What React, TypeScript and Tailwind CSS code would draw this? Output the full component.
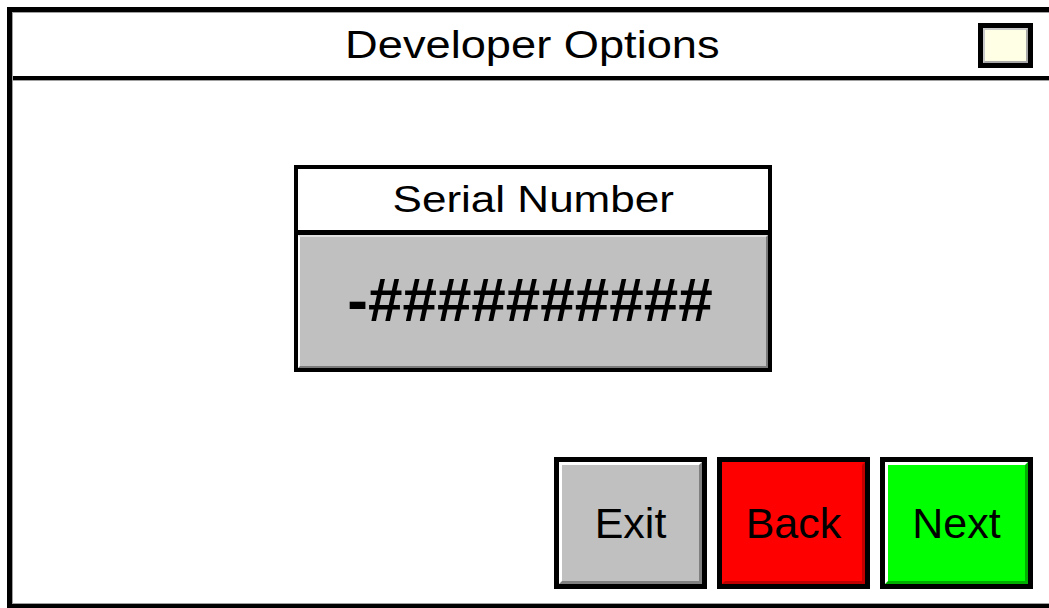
import React from "react";

const font = { fontFamily: '"Liberation Sans", Arial, sans-serif' };

function Btn({ label, bg, light, dark }: { label: string; bg: string; light: string; dark: string }) {
  return (
    <div className="w-[153px] h-[132px] border-[5px] border-black flex">
      <div
        className={`flex-1 flex items-center justify-center border-t-[3px] border-l-[3px] border-r-[3px] border-b-[3px] ${bg} ${light} ${dark}`}
      >
        <span className="text-[43px] leading-none text-black">{label}</span>
      </div>
    </div>
  );
}

export default function App() {
  return (
    <div className="w-[1049px] h-[608px] bg-white overflow-hidden pl-[7px] pt-[7px]" style={font}>
      <div className="w-[1050px] h-[602px] border-[5px] border-black flex">
        <div className="flex-1 flex flex-col border border-[#a0a0a0]">
          {/* header */}
          <div className="h-[63px] grid grid-cols-[1fr_auto_1fr] items-center">
            <div />
            <span className="inline-block text-[38px] leading-none text-black scale-x-[1.19]">
              Developer Options
            </span>
            <div className="flex justify-end pr-[18px] pt-[2px]">
              <div className="w-[55px] h-[45px] border-[5px] border-black flex">
                <div className="flex-1 bg-[#ffffe6] border-t-2 border-l-2 border-t-[#c8c8c8] border-l-[#c8c8c8] border-r-2 border-b-2 border-r-[#a8a8a8] border-b-[#a8a8a8]" />
              </div>
            </div>
          </div>
          <div className="h-[4px] bg-black" />
          <div className="h-px bg-[#a0a0a0]" />
          {/* body */}
          <div className="flex-1 flex flex-col pl-[281px] pt-[84px]">
            <div className="w-[478px] h-[207px] border-4 border-black flex flex-col">
              <div className="h-[61px] bg-white flex items-center justify-center">
                <span className="inline-block text-[37px] leading-none text-black scale-x-[1.19]">Serial Number</span>
              </div>
              <div className="h-[5px] bg-black" />
              <div className="flex-1 bg-[#c0c0c0] border-t-2 border-l-2 border-t-[#e0e0e0] border-l-[#ffffff] border-r-2 border-b-2 border-r-[#7a7a7a] border-b-[#7a7a7a] flex items-center justify-center">
                <span className="text-[62px] font-bold leading-none text-black -mt-[3px] -ml-[6px]">-##########</span>
              </div>
            </div>
            <div className="flex-1" />
            <div className="flex justify-end gap-[10px] pr-[18px] pb-[14px]">
              <Btn label="Exit" bg="bg-[#c0c0c0]" light="border-t-white border-l-white" dark="border-r-[#808080] border-b-[#808080]" />
              <Btn label="Back" bg="bg-[#ff0000]" light="border-t-[#ff0000] border-l-[#ff0000]" dark="border-r-[#c00000] border-b-[#c00000]" />
              <Btn label="Next" bg="bg-[#00ff00]" light="border-t-white border-l-white" dark="border-r-[#00b000] border-b-[#00b000]" />
            </div>
          </div>
        </div>
      </div>
    </div>
  );
}
